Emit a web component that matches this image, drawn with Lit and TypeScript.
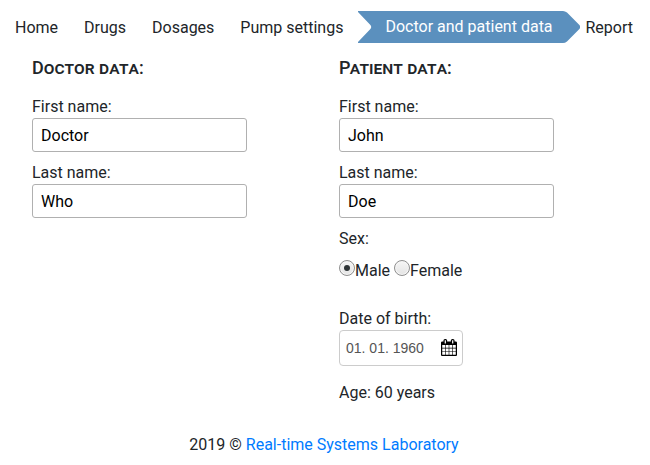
import { LitElement, html, css } from "lit";
import { customElement, property } from "lit/decorators.js";

@customElement("text-field")
class TextField extends LitElement {
  @property() label = "";
  @property() value = "";

  static styles = css`
    :host { display: block; height: 66px; }
    .label { display: block; height: 24px; line-height: 26px; }
    .input {
      display: block; box-sizing: border-box; width: 215px; height: 34px;
      padding: 0 8px; border: 1px solid #b0b0b0; border-radius: 3px;
      background: #fff; color: #000; font: inherit; outline: none; margin: 0;
    }
  `;

  render() {
    return html`<label class="label" for="field">${this.label}</label>
      <input class="input" id="field" type="text" .value=${this.value} />`;
  }
}

@customElement("app-root")
class AppRoot extends LitElement {
  static styles = css`
    :host {
      display: block; height: 465px; overflow: hidden; background: #fff;
      color: #212529; font: 16px/24px Roboto, sans-serif;
    }
    .nav { display: flex; height: 32px; padding: 11px 0 0 15px; line-height: 34px; white-space: nowrap; }
    .item { margin-right: 26px; }
    .pump { margin-right: 14px; }
    .active { display: grid; width: 223px; height: 32px; margin-right: 5px; color: #fff; line-height: 32px; }
    .arrow { grid-area: 1 / 1; display: block; }
    .active-text { grid-area: 1 / 1; padding-left: 28px; z-index: 1; }
    .columns { display: grid; grid-template-columns: 307px 1fr; padding-left: 32px; }
    .title {
      margin: 11px 0 12px; height: 28px; line-height: 28px;
      font-size: 18px; font-weight: 500; font-variant: small-caps;
    }
    .sex { height: 24px; line-height: 26px; }
    .options { display: flex; height: 24px; margin-top: 8px; line-height: 26px; }
    .option { display: flex; margin-right: 4px; }
    .radio {
      box-sizing: border-box; width: 16px; height: 16px; margin-top: 2px;
      border: 1px solid #8f8f8f; border-radius: 50%;
      background: linear-gradient(#f6f6f6, #e4e4e4);
      box-shadow: inset 0 0 0 1px #f6f6f6;
      display: grid; place-items: center;
    }
    .dot { width: 6px; height: 6px; border-radius: 50%; background: #2e3436; }
    .birth { margin-top: 24px; height: 24px; line-height: 26px; }
    .date {
      display: flex; align-items: center; justify-content: space-between;
      box-sizing: border-box; width: 124px; height: 36px; padding: 0 5px 0 6px;
      border: 1px solid #ccc; border-radius: 4px;
      color: #555; font: 14px "Liberation Sans", Arial, sans-serif;
    }
    .calendar { display: block; width: 16px; height: 17px; margin-bottom: 2px; fill: #000; }
    .age { margin-top: 15px; }
    .footer { margin-top: 28px; text-align: center; padding-right: 2px; }
    .link { color: #007bff; text-decoration: none; }
  `;

  render() {
    return html`
      <nav class="nav">
        <span class="item">Home</span>
        <span class="item">Drugs</span>
        <span class="item">Dosages</span>
        <span class="item pump">Pump settings</span>
        <span class="active">
          <svg class="arrow" width="223" height="32" viewBox="0 0 223 32">
            <path fill="#5b90be" d="M1 0H206Q208 0 210 1.5L222.4 14Q224 16 222.4 18L210 30.5Q208 32 206 32H1V31L13.4 18Q15 16 13.4 14L1 1Z" />
          </svg>
          <span class="active-text">Doctor and patient data</span>
        </span>
        <span>Report</span>
      </nav>
      <main class="columns">
        <section>
          <h2 class="title">Doctor data:</h2>
          <text-field label="First name:" value="Doctor"></text-field>
          <text-field label="Last name:" value="Who"></text-field>
        </section>
        <section>
          <h2 class="title">Patient data:</h2>
          <text-field label="First name:" value="John"></text-field>
          <text-field label="Last name:" value="Doe"></text-field>
          <div class="sex">Sex:</div>
          <div class="options">
            <span class="option"><span class="radio"><span class="dot"></span></span>Male</span>
            <span class="option"><span class="radio"></span>Female</span>
          </div>
          <div class="birth">Date of birth:</div>
          <div class="date">
            <span>01. 01. 1960</span>
            <svg class="calendar" viewBox="0 0 1664 1792" preserveAspectRatio="none">
              <path d="M128 1664h288v-288h-288v288zm352 0h320v-288h-320v288zm-352-352h288v-320h-288v320zm352 0h320v-320h-320v320zm-352-384h288v-288h-288v288zm736 736h320v-288h-320v288zm-384-736h320v-288h-320v288zm768 736h288v-288h-288v288zm-384-352h320v-320h-320v320zm-352-864v-288q0-13-9.500-22.500t-22.500-9.500h-64q-13 0-22.500 9.500t-9.500 22.500v288q0 13 9.500 22.500t22.500 9.500h64q13 0 22.500-9.500t9.500-22.500zm736 864h288v-320h-288v320zm-384-384h320v-288h-320v288zm384 0h288v-288h-288v288zm32-480v-288q0-13-9.500-22.500t-22.500-9.500h-64q-13 0-22.500 9.500t-9.500 22.500v288q0 13 9.500 22.500t22.500 9.500h64q13 0 22.500-9.500t9.500-22.500zm384-64v1280q0 52-38 90t-90 38h-1408q-52 0-90-38t-38-90v-1280q0-52 38-90t90-38h128v-96q0-66 47-113t113-47h64q66 0 113 47t47 113v96h384v-96q0-66 47-113t113-47h64q66 0 113 47t47 113v96h128q52 0 90 38t38 90z" />
            </svg>
          </div>
          <div class="age">Age: 60 years</div>
        </section>
      </main>
      <footer class="footer">2019 © <a class="link" href="#">Real-time Systems Laboratory</a></footer>
    `;
  }
}
